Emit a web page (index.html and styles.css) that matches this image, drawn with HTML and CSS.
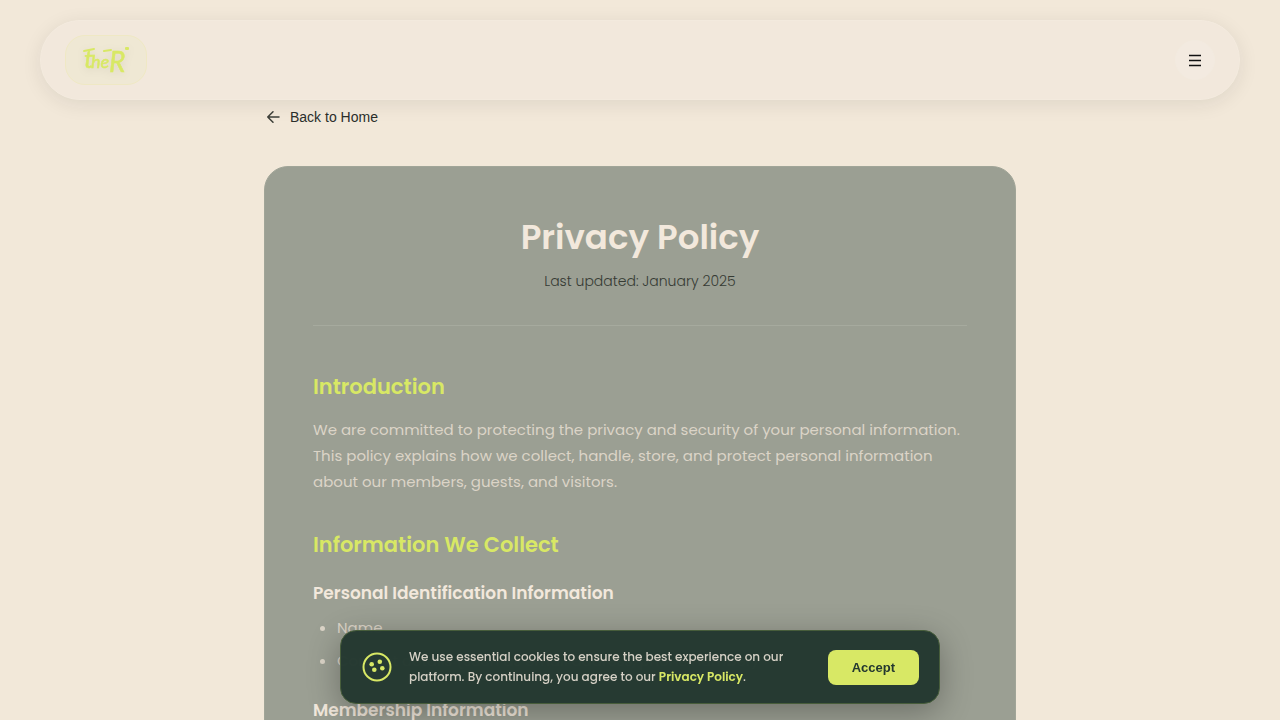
FILE: index.html
```html
<!DOCTYPE html>
<html lang="en">
<head>
    <meta charset="UTF-8">
    <meta name="viewport" content="width=device-width, initial-scale=1.0">
    <title>Privacy Policy</title>
    <link rel="stylesheet" href="styles.css">
</head>
<body>
    <header class="navbar">
        <a href="#" class="logo">
            <svg width="52" height="34" viewBox="0 0 52 34">
                <text class="logo-text" x="4" y="25"><tspan class="logo-t">t</tspan><tspan x="11">he</tspan></text>
                <text class="logo-text logo-big" x="29" y="29">R</text>
                <path class="logo-line" d="M4 8L14 6M24 8L31 7"/>
                <rect x="45" y="4" width="4" height="3" rx="1"/>
            </svg>
        </a>
        <button type="button" class="menu-btn" aria-label="Menu">
            <svg width="14" height="14" viewBox="0 0 14 14">
                <path d="M1 2.5h12M1 7.5h12M1 12.5h12"/>
            </svg>
        </button>
    </header>

    <main class="container">
        <a href="#" class="back-link">
            <svg width="18" height="18" viewBox="0 0 24 24">
                <path d="M20 12H5M12 5l-7 7 7 7"/>
            </svg>
            Back to Home
        </a>

        <article class="card">
            <div class="card-header">
                <h1>Privacy Policy</h1>
                <p class="updated">Last updated: January 2025</p>
            </div>

            <section>
                <h2>Introduction</h2>
                <p>We are committed to protecting the privacy and security of your personal information. This policy explains how we collect, handle, store, and protect personal information about our members, guests, and visitors.</p>
            </section>

            <section>
                <h2>Information We Collect</h2>
                <h3>Personal Identification Information</h3>
                <ul>
                    <li>Name</li>
                    <li>Contact details (such as email address, phone number)</li>
                </ul>
                <h3>Membership Information</h3>
            </section>
        </article>
    </main>

    <div class="cookie-banner">
        <svg class="cookie-icon" width="32" height="32" viewBox="0 0 32 32">
            <circle class="ring" cx="16" cy="16" r="13.5"/>
            <circle cx="10.7" cy="13.3" r="2.3"/>
            <circle cx="18.8" cy="10.7" r="2.3"/>
            <circle cx="13.3" cy="18.7" r="2.3"/>
            <circle cx="21.3" cy="17.3" r="2.3"/>
        </svg>
        <p>We use essential cookies to ensure the best experience on our platform. By continuing, you agree to our <a href="#">Privacy Policy</a>.</p>
        <button type="button" class="accept-btn">Accept</button>
    </div>
</body>
</html>
```
FILE: styles.css
```css
* {
    box-sizing: border-box;
}
body {
    margin: 0;
    background-color: #f2e8d9;
    font-family: Poppins, Inter, sans-serif;
    color: #f2e8dc;
}
h1, h2, h3, p, ul {
    margin: 0;
}
.navbar {
    position: fixed;
    top: 20px;
    left: 40px;
    right: 40px;
    z-index: 10;
    display: flex;
    align-items: center;
    justify-content: space-between;
    height: 80px;
    padding: 0 24px;
    background-color: #f2e8dc;
    border: 1px solid #f3eade;
    border-radius: 40px;
    box-shadow: 0 4px 20px rgba(31, 38, 30, 0.09);
}
.logo {
    display: flex;
    padding: 7px 14px;
    background-color: #efe8d4;
    border: 1px solid #efe8c4;
    border-radius: 20px;
}
.logo svg {
    fill: #d8e865;
    filter: drop-shadow(0 2px 4px rgba(0, 0, 0, 0.08));
}
.logo-text {
    font: italic 400 18px Lato, sans-serif;
    stroke: #d8e865;
    stroke-width: 0.5;
}
.logo-t {
    font-size: 26px;
}
.logo-big {
    font-size: 28px;
}
.logo-line {
    stroke: #d8e865;
    stroke-width: 2;
    stroke-linecap: round;
}
.menu-btn {
    display: flex;
    align-items: center;
    justify-content: center;
    width: 40px;
    height: 40px;
    padding: 0;
    background-color: #f3eae0;
    border: 1px solid #f3ebe0;
    border-radius: 50%;
    cursor: pointer;
}
.menu-btn path {
    stroke: #111;
    stroke-width: 1.4;
}
.container {
    max-width: 800px;
    margin: 0 auto;
    padding: 106px 24px 80px;
}
.back-link {
    display: flex;
    align-items: center;
    gap: 8px;
    width: fit-content;
    margin-bottom: 38px;
    font: 14px/22px "Liberation Sans", Arial, sans-serif;
    color: #2b2f2b;
    text-decoration: none;
}
.back-link path {
    fill: none;
    stroke: #3d3f38;
    stroke-width: 2;
    stroke-linecap: round;
    stroke-linejoin: round;
}
.card {
    padding: 48px;
    background-color: #9b9f93;
    border: 1px solid #a1a598;
    border-radius: 24px;
}
.card-header {
    padding-bottom: 32px;
    margin-bottom: 49px;
    border-bottom: 1px solid #a6aa9e;
    text-align: center;
}
h1 {
    margin-bottom: 10px;
    font-size: 34px;
    font-weight: 600;
    line-height: 44px;
}
.updated {
    font-size: 14px;
    font-weight: 300;
    line-height: 24px;
    color: #363b33;
}
section {
    margin-bottom: 38px;
    font-size: 15px;
    line-height: 26px;
    color: #dbd4c7;
}
h2 {
    margin-bottom: 18px;
    font-size: 21px;
    font-weight: 600;
    line-height: 24px;
    color: #d8e865;
}
h3 {
    margin: 24px 0 10px;
    font-size: 17px;
    font-weight: 600;
    line-height: 24px;
    color: #f2e8dc;
}
ul {
    display: flex;
    flex-direction: column;
    gap: 7px;
    padding-left: 24px;
}
.cookie-banner {
    position: fixed;
    left: 0;
    right: 0;
    bottom: 16px;
    z-index: 20;
    display: flex;
    align-items: center;
    gap: 16px;
    width: 600px;
    max-width: 90%;
    margin: 0 auto;
    padding: 16px 20px;
    background-color: rgba(36, 56, 48, 0.98);
    border: 1px solid #475d3b;
    border-radius: 16px;
    box-shadow: 0 8px 32px rgba(0, 0, 0, 0.3);
}
.cookie-icon {
    flex-shrink: 0;
    fill: #d8e865;
}
.cookie-icon .ring {
    fill: none;
    stroke: #d8e865;
    stroke-width: 2;
}
.cookie-banner p {
    flex: 1;
    font-size: 12px;
    font-weight: 500;
    line-height: 20px;
    color: #d5d0c5;
}
.cookie-banner a {
    font-weight: 600;
    color: #d8e865;
    text-decoration: none;
}
.accept-btn {
    padding: 10px 24px;
    background-color: #d8e865;
    border: none;
    border-radius: 8px;
    font: bold 13px "Liberation Sans", Arial, sans-serif;
    color: #243830;
    cursor: pointer;
}
```
